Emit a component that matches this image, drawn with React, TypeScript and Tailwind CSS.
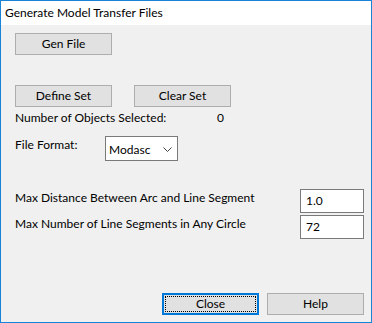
const font = { fontFamily: 'Lato, "Noto Sans", sans-serif' };

function Btn({ label, focused = false }: { label: string; focused?: boolean }) {
  if (focused) {
    return (
      <button className="w-[97px] h-[22px] border-2 border-[#0078d7] bg-[#e1e1e1] p-[1px] text-[12px] text-black">
        <span className="flex h-full w-full items-center justify-center border border-dotted border-black leading-none">
          {label}
        </span>
      </button>
    );
  }
  return (
    <button className="w-[97px] h-[22px] border border-[#adadad] bg-[#e1e1e1] text-[12px] text-black leading-none flex items-center justify-center">
      {label}
    </button>
  );
}

export default function App() {
  return (
    <div
      className="w-[372px] h-[323px] border border-[#1883d7] bg-[#f0f0f0] flex flex-col text-black"
      style={font}
    >
      {/* Title bar */}
      <div className="h-[24px] bg-white pl-[4px] flex items-center text-[12px]">
        Generate Model Transfer Files
      </div>

      {/* Body */}
      <div className="flex-1 flex flex-col px-[14px]">
        <div className="mt-[8px]">
          <Btn label="Gen File" />
        </div>

        <div className="mt-[30px] flex gap-[22px]">
          <Btn label="Define Set" />
          <Btn label="Clear Set" />
        </div>

        <div className="mt-[3px] flex text-[12px] leading-[16px]">
          <span className="w-[202px]">Number of Objects Selected:</span>
          <span>0</span>
        </div>

        <div className="mt-[10px] flex items-start text-[12px]">
          <span className="w-[90px] mt-[1px] leading-[16px]">File Format:</span>
          <div className="w-[73px] h-[25px] border border-[#7a7a7a] bg-white flex items-center justify-between pl-[3px] pr-[5px]">
            <span className="leading-none mt-[2px]">Modasc</span>
            <svg width="9" height="5" viewBox="0 0 9 5" className="mt-[1px]">
              <path d="M0.5 0.5 L4.5 4.5 L8.5 0.5" fill="none" stroke="#444" strokeWidth="1" />
            </svg>
          </div>
        </div>

        <div className="mt-[28px] flex items-start justify-between text-[12px]">
          <span className="mt-[1px] leading-[16px]">Max Distance Between Arc and Line Segment</span>
          <div className="w-[64px] h-[24px] border border-[#7a7a7a] bg-white pl-[5px] flex items-center -mr-[7px]">
            1.0
          </div>
        </div>

        <div className="mt-[2px] flex items-start justify-between text-[12px]">
          <span className="mt-[1px] leading-[16px]">Max Number of Line Segments in Any Circle</span>
          <div className="w-[64px] h-[24px] border border-[#7a7a7a] bg-white pl-[5px] flex items-center -mr-[7px]">
            72
          </div>
        </div>

        <div className="mt-auto mb-[7px] flex justify-end gap-[8px] -mr-[7px]">
          <Btn label="Close" focused />
          <Btn label="Help" />
        </div>
      </div>
    </div>
  );
}
